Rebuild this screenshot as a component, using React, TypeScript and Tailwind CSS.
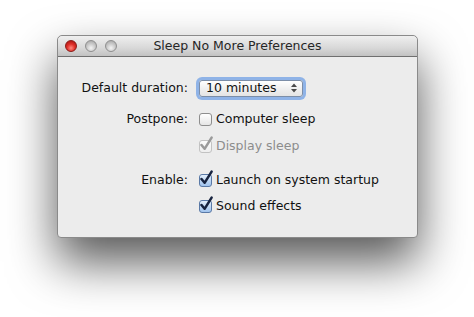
const font = { fontFamily: '"DejaVu Sans", "Liberation Sans", sans-serif' }

function TrafficLight({ color }: { color: 'red' | 'gray' }) {
  const cls =
    color === 'red'
      ? 'bg-[radial-gradient(circle_at_50%_70%,#ff8a80_0%,#e0302a_45%,#9c0f0c_100%)] border-[#8a1a16]'
      : 'bg-[radial-gradient(circle_at_50%_70%,#f4f4f4_0%,#c9c9c9_50%,#a0a0a0_100%)] border-[#8f8f8f]'
  return <div className={`h-[12px] w-[12px] rounded-full border ${cls}`} />
}

function CheckMark({ disabled }: { disabled?: boolean }) {
  return (
    <svg
      className="absolute -right-[3px] -top-[5px]"
      width="15"
      height="16"
      viewBox="0 0 15 16"
    >
      <path
        d="M2.5 9 L5.6 12.8 L12.6 1.6"
        fill="none"
        stroke={disabled ? '#9a9a9a' : '#17233f'}
        strokeWidth="2.5"
        strokeLinecap="round"
        strokeLinejoin="round"
      />
    </svg>
  )
}

function Checkbox({
  label,
  checked,
  disabled,
}: {
  label: string
  checked?: boolean
  disabled?: boolean
}) {
  let box = 'border-[#8e8e8e] bg-[linear-gradient(#ffffff,#e6e6e6)]'
  if (checked && !disabled)
    box = 'border-[#5a79a6] bg-[linear-gradient(#e3effc,#9fc2ec)]'
  if (disabled) box = 'border-[#c2c2c2] bg-[linear-gradient(#fbfbfb,#eeeeee)]'
  return (
    <div className="flex h-[18px] items-center">
      <div className={`relative ml-[2px] h-[13px] w-[13px] rounded-[3px] border ${box}`}>
        {checked && <CheckMark disabled={disabled} />}
      </div>
      <span
        className={`ml-[4px] whitespace-nowrap text-[12.5px] ${disabled ? 'text-[#8c8c8c]' : 'text-[#111]'}`}
      >
        {label}
      </span>
    </div>
  )
}

function Label({ children }: { children: string }) {
  return (
    <div className="flex h-[18px] items-center justify-end whitespace-nowrap text-[12.5px] text-[#111]">
      {children}
    </div>
  )
}

export default function App() {
  return (
    <div className="h-[317px] w-[474px] overflow-hidden bg-white pl-[57px] pt-[35px]" style={font}>
      <div className="w-[361px] rounded-[5px] rounded-b-[4px] border border-[#8a8a8a] bg-[#ececec] shadow-[0_24px_48px_rgba(0,0,0,0.66)]">
        {/* title bar */}
        <div className="relative flex h-[21px] items-center rounded-t-[5px] border-b border-[#6f6f6f] bg-[linear-gradient(#efefef,#d8d8d8_60%,#c2c2c2)] pl-[7px]">
          <div className="flex gap-[8px]">
            <TrafficLight color="red" />
            <TrafficLight color="gray" />
            <TrafficLight color="gray" />
          </div>
          <div className="absolute inset-0 flex items-center justify-center text-[12.5px] text-[#262626]">
            Sleep No More Preferences
          </div>
        </div>

        {/* form */}
        <div className="grid grid-cols-[110px_auto] gap-x-[9px] pb-[22px] pl-[20px] pt-[20px]">
          <div className="flex h-[22px] items-center justify-end whitespace-nowrap text-[12.5px] text-[#111]">
            Default duration:
          </div>
          <div className="flex h-[22px] items-center">
            <div className="ml-[2px] flex h-[17px] w-[104px] items-center justify-between rounded-[3px] border border-[#7c8ea8] bg-[linear-gradient(#ffffff,#f0f0f0_50%,#e4e4e4)] pl-[6px] pr-[5px] text-[12.5px] text-[#111] shadow-[0_0_0_3px_rgba(112,160,230,0.75)]">
              <span>10 minutes</span>
              <svg width="6" height="10" viewBox="0 0 6 10">
                <path d="M0 4 L3 0.5 L6 4 Z M0 6 L3 9.5 L6 6 Z" fill="#4a4a4a" />
              </svg>
            </div>
          </div>

          <div className="mt-[11px]">
            <Label>Postpone:</Label>
          </div>
          <div className="mt-[11px]">
            <Checkbox label="Computer sleep" />
          </div>

          <div className="mt-[9px]" />
          <div className="mt-[9px]">
            <Checkbox label="Display sleep" checked disabled />
          </div>

          <div className="mt-[16px]">
            <Label>Enable:</Label>
          </div>
          <div className="mt-[16px]">
            <Checkbox label="Launch on system startup" checked />
          </div>

          <div className="mt-[8px]" />
          <div className="mt-[8px]">
            <Checkbox label="Sound effects" checked />
          </div>
        </div>
      </div>
    </div>
  )
}
